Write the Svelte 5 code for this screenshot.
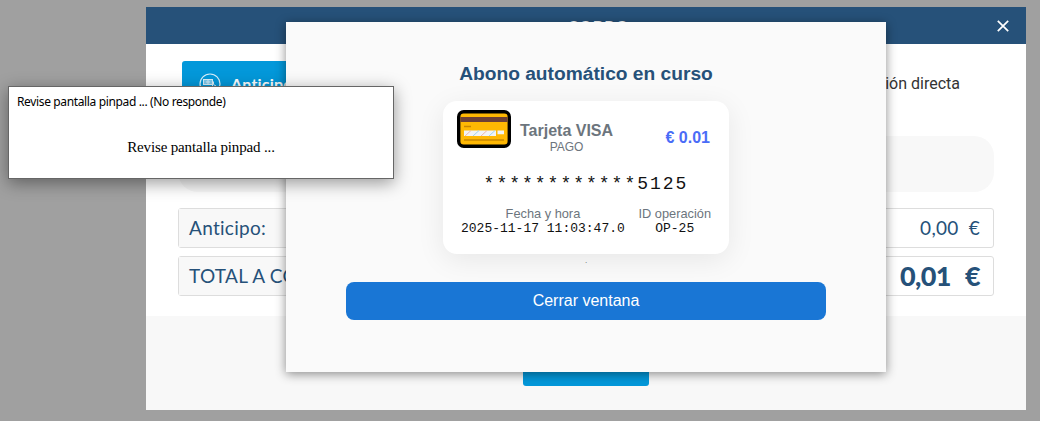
<script>
	const totals = [
		{ label: 'Anticipo:', amount: '0,00', strong: false },
		{ label: 'TOTAL A COBRAR:', amount: '0,01', strong: true },
	];

	const operation = {
		card: 'Tarjeta VISA',
		type: 'PAGO',
		amount: '€ 0.01',
		number: '************5125',
		date: '2025-11-17 11:03:47.0',
		id: 'OP-25',
	};
</script>

<div class="screen">
	<section class="payment">
		<header class="payment-header">
			<h1>COBRO</h1>
			<button class="close" aria-label="Cerrar">
				<svg width="12" height="12" viewBox="0 0 12 12">
					<path d="M.8.8l10.4 10.4M11.2.8L.8 11.2" stroke="#fff" stroke-width="1.7" />
				</svg>
			</button>
		</header>

		<div class="payment-body">
			<div class="tabs">
				<button class="tab active">
					<svg width="22" height="22" viewBox="0 0 22 22" fill="none" stroke="#d9f0fb">
						<circle cx="11" cy="11" r="10" stroke-width="1.2" />
						<rect x="4.5" y="6.5" width="9" height="5" fill="#7fc9ec" />
						<circle cx="9" cy="9" r="1.2" />
						<path d="M5 13.5h8M14.5 8.5v3l2.5 1.5v3M13 12l2 2v2" />
					</svg>
					<span>Anticipo</span>
				</button>
				<span class="tab-plain">Operación directa</span>
			</div>

			<div class="notice"></div>

			{#each totals as row}
				<div class="total" class:strong={row.strong}>
					<span class="total-label">{row.label}</span>
					<span class="total-value"><span class="amount">{row.amount}</span><span class="euro">€</span></span>
				</div>
			{/each}
		</div>

		<footer class="payment-footer">
			<button class="accept" aria-label="Aceptar"></button>
		</footer>
	</section>

	<section class="modal">
		<h2>Abono automático en curso</h2>

		<div class="card">
			<div class="card-top">
				<svg class="card-icon" width="54" height="38" viewBox="0 0 54 38">
					<rect x="1.7" y="1.7" width="50.6" height="34.6" rx="5" fill="#ffb803" stroke="#000" stroke-width="3.4" />
					<path d="M3.4 7h47.2v5H3.4z" fill="#6d4037" />
					<path d="M7 16.5h7M7 30h40" stroke="#c98600" stroke-width="1.6" />
					<path d="M7 20.5h32v5.5H7zM40.500 20.500h6.500v3.700h-6.500z" fill="#f1f3f4" />
					<path d="M8 26l6-5.500M24 26l6-5.500" stroke="#f2b6a6" />
					<path d="M16 26l6-5.500M32 26l6-5.500" stroke="#9fd3ee" />
				</svg>
				<div class="card-name">
					<strong>{operation.card}</strong>
					<span>{operation.type}</span>
				</div>
				<span class="card-amount">{operation.amount}</span>
			</div>
			<div class="card-number">{operation.number}</div>
			<div class="card-details">
				<div>
					<span class="detail-label">Fecha y hora</span>
					<span class="detail-value">{operation.date}</span>
				</div>
				<div>
					<span class="detail-label">ID operación</span>
					<span class="detail-value">{operation.id}</span>
				</div>
			</div>
		</div>

		<div class="dot">.</div>
		<button class="close-window">Cerrar ventana</button>
	</section>

	<section class="pinpad">
		<div class="pinpad-title">Revise pantalla pinpad ... (No responde)</div>
		<div class="pinpad-text">Revise pantalla pinpad ...</div>
	</section>
</div>

<style>
	:global(body) {
		overflow: hidden;
	}

	.screen {
		position: relative;
		box-sizing: border-box;
		width: 1040px;
		height: 421px;
		padding: 7px 14px 11px 146px;
		background: #a0a0a0;
		font-family: "Liberation Sans", Arial, sans-serif;
		overflow: hidden;
	}

	button {
		border: 0;
		padding: 0;
		font: inherit;
	}

	.payment {
		display: flex;
		flex-direction: column;
		height: 403px;
		background: #fff;
	}

	.payment-header {
		display: grid;
		grid-template-columns: 48px 1fr 48px;
		align-items: center;
		height: 37px;
		flex: none;
		background: #265179;
	}

	h1 {
		grid-column: 2;
		margin: 0 0 0 25px;
		text-align: center;
		color: #fff;
		font: 700 16px/20px Lato, sans-serif;
		letter-spacing: 1px;
	}

	.close {
		display: flex;
		justify-content: center;
		padding-left: 2px;
		background: none;
	}

	.payment-body {
		box-sizing: border-box;
		height: 272px;
		flex: none;
		padding: 17px 32px 0;
	}

	.tabs {
		display: flex;
		justify-content: space-between;
		align-items: center;
		height: 45px;
		padding: 0 34px 0 4px;
	}

	.tab {
		display: flex;
		align-items: center;
		gap: 10px;
		width: 200px;
		height: 45px;
		padding-left: 17px;
		border-radius: 3px;
		background: #0398da;
		color: #fff;
		font: 700 16px Lato, sans-serif;
		letter-spacing: 0.2px;
	}

	.tab-plain {
		color: #333;
		font: 16px Roboto, sans-serif;
	}

	.notice {
		height: 56px;
		margin: 30px 0 16px;
		border-radius: 20px;
		background: #f8f8f8;
	}

	.total {
		display: grid;
		grid-template-columns: 1fr 1fr;
		box-sizing: border-box;
		height: 40px;
		margin-bottom: 8px;
		border: 1px solid #ddd;
		border-radius: 3px;
		color: #265179;
		font: 19px/37px Lato, sans-serif;
		letter-spacing: 0.3px;
	}

	.total-label {
		padding-left: 10px;
		background: #f8f8f8;
	}

	.total-value {
		display: flex;
		justify-content: flex-end;
		gap: 10px;
		padding-right: 13px;
	}

	.strong .total-value {
		gap: 14px;
		font-weight: 900;
		font-size: 27px;
		letter-spacing: -0.6px;
	}

	.payment-footer {
		display: flex;
		justify-content: center;
		align-items: flex-end;
		flex: 1;
		padding-bottom: 24px;
		background: #f8f8f8;
	}

	.accept {
		width: 126px;
		height: 45px;
		border-radius: 3px;
		background: #0398da;
	}

	.modal {
		position: absolute;
		left: 286px;
		top: 22px;
		display: flex;
		flex-direction: column;
		align-items: center;
		box-sizing: border-box;
		width: 600px;
		height: 350px;
		padding-top: 40px;
		background: #fafafa;
		box-shadow: 0 2px 10px rgba(0, 0, 0, 0.45);
	}

	h2 {
		margin: 0 0 15px;
		color: #265179;
		font-size: 19.200px;
		line-height: 24px;
	}

	.card {
		box-sizing: border-box;
		width: 286px;
		height: 153px;
		flex: none;
		padding: 9px 14px 0;
		border-radius: 14px;
		background: #fff;
		box-shadow: 0 6px 28px rgba(0, 0, 0, 0.08);
	}

	.card-top {
		display: flex;
		align-items: flex-start;
		height: 50px;
	}

	.card-name {
		display: flex;
		flex-direction: column;
		align-items: center;
		margin: 11px 0 0 9px;
		color: #6c757d;
		font-size: 12px;
		line-height: 14px;
	}

	.card-name strong {
		font-size: 16px;
		line-height: 19px;
	}

	.card-amount {
		margin: 18px 5px 0 auto;
		color: #4a6cf7;
		font-size: 16px;
		font-weight: 700;
		line-height: 19px;
	}

	.card-number {
		margin-top: 15px;
		text-align: center;
		color: #111;
		font: 18px/18px "Liberation Mono", monospace;
		letter-spacing: 2px;
	}

	.card-details {
		display: flex;
		justify-content: space-between;
		margin: 12px 4px 0;
	}

	.card-details > div {
		display: flex;
		flex-direction: column;
		align-items: center;
	}

	.detail-label {
		color: #6c757d;
		font-size: 12.800px;
		line-height: 17px;
	}

	.detail-value {
		color: #111;
		font: 13px/14px "Liberation Mono", monospace;
	}

	.dot {
		height: 28px;
		color: #555;
		font-size: 8px;
		line-height: 14px;
	}

	.close-window {
		width: 480px;
		height: 38px;
		flex: none;
		border-radius: 8px;
		background: #1976d5;
		color: #fff;
		font-size: 16px;
	}

	.pinpad {
		position: absolute;
		left: 8px;
		top: 86px;
		box-sizing: border-box;
		width: 386px;
		height: 93px;
		border: 1px solid #666;
		background: #fff;
		color: #000;
		box-shadow: 0 4px 16px rgba(0, 0, 0, 0.4);
	}

	.pinpad-title {
		padding: 7px 8px 0;
		font: 12px/16px "Noto Sans", sans-serif;
		letter-spacing: -0.36px;
	}

	.pinpad-text {
		margin-top: 28px;
		text-align: center;
		font: 15px/18px "Liberation Serif", serif;
		letter-spacing: -0.16px;
	}
</style>
